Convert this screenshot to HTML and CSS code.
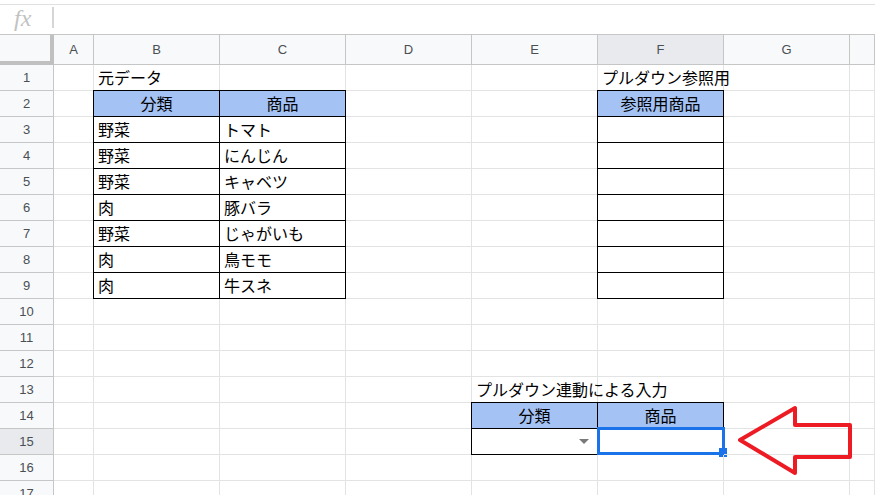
FILE: index.html
```html
<!DOCTYPE html>
<html lang="ja">
<head>
<meta charset="utf-8">
<link rel="stylesheet" href="styles.css">
</head>
<body>
<div class="topgap"></div>
<div class="formula">
  <span class="fx">fx</span>
  <span class="fsep"></span>
</div>
<div class="sheet">
  <div class="corner"></div><div class="ch">A</div><div class="ch">B</div><div class="ch">C</div><div class="ch">D</div><div class="ch">E</div><div class="ch on">F</div><div class="ch">G</div><div class="ch"></div>

  <div class="rh">1</div><div class="c"></div><div class="c txt">元データ</div><div class="c"></div><div class="c"></div><div class="c"></div><div class="c txt">プルダウン参照用</div><div class="c"></div><div class="c"></div>

  <div class="rh">2</div><div class="c"></div><div class="c t tl tt hd">分類</div><div class="c t tt hd">商品</div><div class="c"></div><div class="c"></div><div class="c t tl tt hd">参照用商品</div><div class="c"></div><div class="c"></div>

  <div class="rh">3</div><div class="c"></div><div class="c t tl">野菜</div><div class="c t">トマト</div><div class="c"></div><div class="c"></div><div class="c t tl"></div><div class="c"></div><div class="c"></div>

  <div class="rh">4</div><div class="c"></div><div class="c t tl">野菜</div><div class="c t">にんじん</div><div class="c"></div><div class="c"></div><div class="c t tl"></div><div class="c"></div><div class="c"></div>

  <div class="rh">5</div><div class="c"></div><div class="c t tl">野菜</div><div class="c t">キャベツ</div><div class="c"></div><div class="c"></div><div class="c t tl"></div><div class="c"></div><div class="c"></div>

  <div class="rh">6</div><div class="c"></div><div class="c t tl">肉</div><div class="c t">豚バラ</div><div class="c"></div><div class="c"></div><div class="c t tl"></div><div class="c"></div><div class="c"></div>

  <div class="rh">7</div><div class="c"></div><div class="c t tl">野菜</div><div class="c t">じゃがいも</div><div class="c"></div><div class="c"></div><div class="c t tl"></div><div class="c"></div><div class="c"></div>

  <div class="rh">8</div><div class="c"></div><div class="c t tl">肉</div><div class="c t">鳥モモ</div><div class="c"></div><div class="c"></div><div class="c t tl"></div><div class="c"></div><div class="c"></div>

  <div class="rh">9</div><div class="c"></div><div class="c t tl">肉</div><div class="c t">牛スネ</div><div class="c"></div><div class="c"></div><div class="c t tl"></div><div class="c"></div><div class="c"></div>

  <div class="rh">10</div><div class="c"></div><div class="c"></div><div class="c"></div><div class="c"></div><div class="c"></div><div class="c"></div><div class="c"></div><div class="c"></div>

  <div class="rh">11</div><div class="c"></div><div class="c"></div><div class="c"></div><div class="c"></div><div class="c"></div><div class="c"></div><div class="c"></div><div class="c"></div>

  <div class="rh">12</div><div class="c"></div><div class="c"></div><div class="c"></div><div class="c"></div><div class="c"></div><div class="c"></div><div class="c"></div><div class="c"></div>

  <div class="rh">13</div><div class="c"></div><div class="c"></div><div class="c"></div><div class="c"></div><div class="c txt">プルダウン連動による入力</div><div class="c"></div><div class="c"></div><div class="c"></div>

  <div class="rh">14</div><div class="c"></div><div class="c"></div><div class="c"></div><div class="c"></div><div class="c t tl tt hd">分類</div><div class="c t tt hd">商品</div><div class="c"></div><div class="c"></div>

  <div class="rh on">15</div><div class="c"></div><div class="c"></div><div class="c"></div><div class="c"></div><div class="c t tl dd"><span class="tri"></span></div><div class="c t sel"><span class="selbox"></span><span class="handle"></span></div><div class="c"></div><div class="c"></div>

  <div class="rh">16</div><div class="c"></div><div class="c"></div><div class="c"></div><div class="c"></div><div class="c"></div><div class="c"></div><div class="c"></div><div class="c"></div>

  <div class="rh">17</div><div class="c"></div><div class="c"></div><div class="c"></div><div class="c"></div><div class="c"></div><div class="c"></div><div class="c"></div><div class="c"></div>

  <svg class="arrow" width="120" height="74" viewBox="0 0 120 74">
    <polygon points="4,36 59,4 59,21 114,21 114,53 59,53 59,69" fill="none" stroke="#ed1c24" stroke-width="4" stroke-linejoin="round"/>
  </svg>
</div>
</body>
</html>
```

FILE: styles.css
```css
html, body {
  margin: 0;
  padding: 0;
  background: #fff;
  overflow: hidden;
}
body {
  width: 875px;
  height: 495px;
  font-family: "Noto Sans CJK JP", "Noto Sans", sans-serif;
}
.topgap {
  height: 4px;
}
.formula {
  height: 29px;
  border-top: 1px solid #e0e0e0;
  display: flex;
  align-items: center;
  box-sizing: content-box;
}
.fx {
  font-family: "Liberation Serif", serif;
  font-style: italic;
  font-size: 24px;
  color: #c2c2c2;
  margin-left: 14px;
  width: 38px;
  line-height: 1;
  position: relative;
  top: -2px;
}
.fsep {
  width: 2px;
  height: 21px;
  background: #d6d6d6;
  margin-top: -4px;
}
.sheet {
  position: relative;
  border-top: 1px solid #c4c7c5;
  display: grid;
  grid-template-columns: 54px 40px repeat(6, 126px) 1fr;
  grid-template-rows: 30px;
  grid-auto-rows: 26px;
  width: 875px;
}
.sheet > div {
  box-sizing: border-box;
}
.corner {
  background: #f8f9fa;
  border-right: 4px solid #c0c0c0;
  border-bottom: 4px solid #c0c0c0;
}
.ch, .rh {
  background: #f8f9fa;
  border-right: 1px solid #c4c7c5;
  border-bottom: 1px solid #c4c7c5;
  font-family: "Liberation Sans", Arial, sans-serif;
  font-size: 13px;
  color: #4a4f55;
  display: flex;
  align-items: center;
  justify-content: center;
}
.ch.on, .rh.on {
  background: #e8eaed;
}
.c {
  border-right: 1px solid #e2e3e3;
  border-bottom: 1px solid #e2e3e3;
  font-size: 16px;
  line-height: 25px;
  color: #000;
  padding-left: 4px;
  white-space: nowrap;
  position: relative;
}
.txt {
  overflow: visible;
}
.t {
  border-right-color: #000;
  border-bottom-color: #000;
}
.tl {
  box-shadow: -1px 0 0 #000;
}
.tt {
  box-shadow: 0 -1px 0 #000;
}
.tl.tt {
  box-shadow: -1px 0 0 #000, 0 -1px 0 #000, -1px -1px 0 #000;
}
.hd {
  background: #a4c2f4;
  text-align: center;
  padding-left: 0;
}
.dd {
  display: flex;
  align-items: center;
  justify-content: flex-end;
  padding-right: 8px;
}
.tri {
  width: 0;
  height: 0;
  border-left: 5px solid transparent;
  border-right: 5px solid transparent;
  border-top: 5px solid #7a7a7a;
}
.selbox {
  position: absolute;
  left: -1px;
  top: -2px;
  width: 128px;
  height: 28px;
  border: 3px solid #1a73e8;
  box-sizing: border-box;
}
.handle {
  position: absolute;
  left: 121px;
  top: 19px;
  width: 8px;
  height: 9px;
  background: #1a73e8;
}
.arrow {
  position: absolute;
  left: 736px;
  top: 369px;
}
```
